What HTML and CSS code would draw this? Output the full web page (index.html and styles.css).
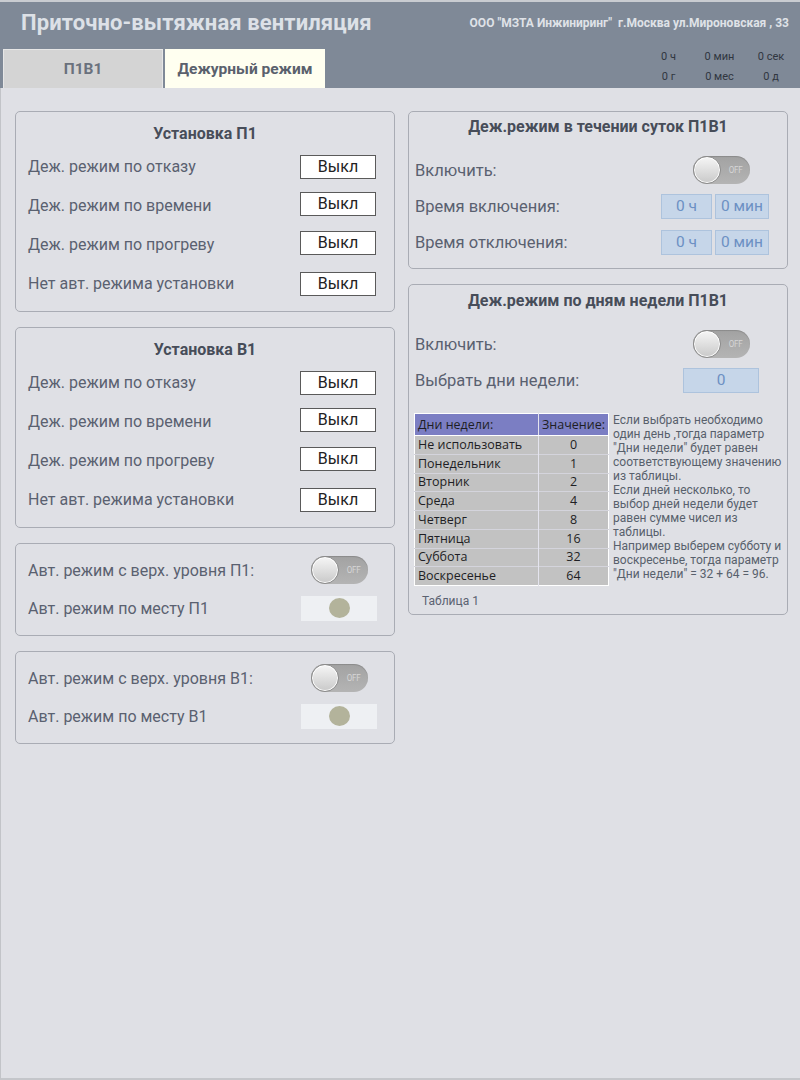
FILE: index.html
```html
<!DOCTYPE html>
<html lang="ru">
<head>
<meta charset="utf-8">
<title>Приточно-вытяжная вентиляция</title>
<link rel="stylesheet" href="styles.css">
</head>
<body>
<div class="screen">
  <header class="top">
    <div class="top-row">
      <h1 class="title">Приточно-вытяжная вентиляция</h1>
      <div class="company">ООО "МЗТА Инжиниринг"&nbsp; г.Москва ул.Мироновская , 33</div>
    </div>
    <div class="tab-row">
      <div class="tabs">
        <div class="tab tab-off">П1В1</div>
        <div class="tab tab-on">Дежурный режим</div>
      </div>
      <div class="clock">
        <span class="tcell">0 ч</span><span class="tcell">0 мин</span><span class="tcell">0 сек</span>
        <span class="tcell">0 г</span><span class="tcell">0 мес</span><span class="tcell">0 д</span>
      </div>
    </div>
  </header>

  <main class="content">
    <div class="col">
      <section class="panel panel-set">
        <h2 class="panel-title">Установка П1</h2>
        <div class="row"><span class="label">Деж. режим по отказу</span><span class="btn b1">Выкл</span></div>
        <div class="row"><span class="label">Деж. режим по времени</span><span class="btn b2">Выкл</span></div>
        <div class="row"><span class="label">Деж. режим по прогреву</span><span class="btn b3">Выкл</span></div>
        <div class="row"><span class="label">Нет авт. режима установки</span><span class="btn b4">Выкл</span></div>
      </section>

      <section class="panel panel-set">
        <h2 class="panel-title">Установка В1</h2>
        <div class="row"><span class="label">Деж. режим по отказу</span><span class="btn b1">Выкл</span></div>
        <div class="row"><span class="label">Деж. режим по времени</span><span class="btn b2">Выкл</span></div>
        <div class="row"><span class="label">Деж. режим по прогреву</span><span class="btn b3">Выкл</span></div>
        <div class="row"><span class="label">Нет авт. режима установки</span><span class="btn b4">Выкл</span></div>
      </section>

      <section class="panel panel-auto">
        <div class="row row-auto"><span class="label">Авт. режим с верх. уровня П1:</span><span class="toggle toggle-left"><span class="knob"></span><span class="off">OFF</span></span></div>
        <div class="row row-auto"><span class="label">Авт. режим по месту П1</span><span class="indicator"><span class="lamp"></span></span></div>
      </section>

      <section class="panel panel-auto">
        <div class="row row-auto"><span class="label">Авт. режим с верх. уровня В1:</span><span class="toggle toggle-left"><span class="knob"></span><span class="off">OFF</span></span></div>
        <div class="row row-auto"><span class="label">Авт. режим по месту В1</span><span class="indicator"><span class="lamp"></span></span></div>
      </section>
    </div>

    <div class="col">
      <section class="panel panel-day">
        <h2 class="panel-title panel-title-r">Деж.режим в течении суток П1В1</h2>
        <div class="rrow"><span class="label">Включить:</span><span class="toggle toggle-r"><span class="knob"></span><span class="off">OFF</span></span></div>
        <div class="rrow"><span class="label">Время включения:</span><span class="fields"><span class="field f-h">0 ч</span><span class="field f-m">0 мин</span></span></div>
        <div class="rrow"><span class="label">Время отключения:</span><span class="fields"><span class="field f-h">0 ч</span><span class="field f-m">0 мин</span></span></div>
      </section>

      <section class="panel panel-week">
        <h2 class="panel-title panel-title-w">Деж.режим по дням недели П1В1</h2>
        <div class="rrow"><span class="label">Включить:</span><span class="toggle toggle-r"><span class="knob"></span><span class="off">OFF</span></span></div>
        <div class="rrow"><span class="label">Выбрать дни недели:</span><span class="field f-day">0</span></div>
        <div class="week-body">
          <table class="days">
            <thead>
              <tr><th class="c-name">Дни недели:</th><th class="c-val">Значение:</th></tr>
            </thead>
            <tbody>
              <tr><td class="c-name">Не использовать</td><td class="c-val">0</td></tr>
              <tr><td class="c-name">Понедельник</td><td class="c-val">1</td></tr>
              <tr><td class="c-name">Вторник</td><td class="c-val">2</td></tr>
              <tr><td class="c-name">Среда</td><td class="c-val">4</td></tr>
              <tr><td class="c-name">Четверг</td><td class="c-val">8</td></tr>
              <tr><td class="c-name">Пятница</td><td class="c-val">16</td></tr>
              <tr><td class="c-name">Суббота</td><td class="c-val">32</td></tr>
              <tr><td class="c-name">Воскресенье</td><td class="c-val">64</td></tr>
            </tbody>
          </table>
          <p class="note">Если выбрать необходимо один день ,тогда параметр "Дни недели" будет равен соответствующему значению из таблицы.<br>Если дней несколько, то выбор дней недели будет равен сумме чисел из таблицы.<br>Например выберем субботу и воскресенье, тогда параметр "Дни недели" = 32 + 64 = 96.</p>
        </div>
        <div class="caption">Таблица 1</div>
      </section>
    </div>
  </main>
</div>
</body>
</html>
```

FILE: styles.css
```css
* { box-sizing: border-box; }

html, body {
  margin: 0;
  padding: 0;
}

body {
  width: 800px;
  height: 1080px;
  overflow: hidden;
  font-family: Roboto, "Noto Sans", "DejaVu Sans", sans-serif;
  background: #dfe0e5;
}

.screen {
  width: 800px;
  height: 1080px;
  background: #dfe0e5;
  border-left: 1px solid #c2c4c8;
  border-bottom: 2px solid #c4c6ca;
  display: flex;
  flex-direction: column;
}

/* ---------- header ---------- */
.top {
  background: #7f8997;
  border-top: 2px solid #c9ccd1;
  margin-left: -1px;
}

.top-row {
  height: 47px;
  display: flex;
  justify-content: space-between;
  align-items: flex-start;
}

.title {
  margin: 10px 0 0 21px;
  font-size: 22px;
  line-height: 22px;
  font-weight: 700;
  color: #dde1e7;
  letter-spacing: 0.1px;
}

.company {
  margin: 14px 11px 0 0;
  font-size: 12px;
  line-height: 15px;
  font-weight: 700;
  color: #dfe2e7;
  white-space: pre;
}

.tab-row {
  height: 39px;
  display: flex;
  justify-content: space-between;
  align-items: flex-start;
}

.tabs {
  display: flex;
  gap: 2px;
  padding-left: 3px;
  height: 39px;
}

.tab {
  width: 160px;
  height: 39px;
  display: flex;
  align-items: center;
  justify-content: center;
  font-size: 15.5px;
  font-weight: 700;
}

.tab-off {
  background: #d4d4d4;
  border: 1px solid #e6e6e6;
  border-bottom: none;
  color: #6a717d;
}

.tab-on {
  background: #fffff0;
  color: #5a616d;
}

.clock {
  display: grid;
  grid-template-columns: 51px 51px 52px;
  grid-auto-rows: 20px;
  margin-top: -2px;
  margin-right: 3px;
  font-size: 11px;
  line-height: 20px;
  color: #30363f;
}

.tcell {
  display: block;
  text-align: center;
  white-space: nowrap;
}

/* ---------- content ---------- */
.content {
  display: flex;
  gap: 13px;
  padding: 23px 0 0 14px;
}

.col {
  width: 380px;
  display: flex;
  flex-direction: column;
  gap: 15px;
}

.panel {
  border: 1px solid #a9acb4;
  border-radius: 5px;
}

.panel-title {
  margin: 0;
  font-size: 16px;
  line-height: 18px;
  font-weight: 700;
  color: #474d59;
  text-align: center;
}

.label {
  font-size: 16px;
  color: #5a6170;
  white-space: nowrap;
}

/* left "Установка" panels */
.panel-set {
  height: 201px;
  padding: 13px 0 8px 0;
}

.panel-set .panel-title {
  margin-bottom: 4px;
}

.row {
  height: 39px;
  display: flex;
  align-items: center;
  justify-content: space-between;
  padding: 0 18px 0 12px;
}

.btn {
  width: 76px;
  height: 24px;
  background: #ffffff;
  border: 1px solid #5a5a5a;
  font-size: 16px;
  color: #222;
  display: flex;
  align-items: center;
  justify-content: center;
}

.b2 { position: relative; top: -2px; }
.b3 { position: relative; top: -2px; }

/* auto panels */
.panel-auto {
  height: 93px;
  padding: 7px 0 8px 0;
}

.row-auto {
  height: 38px;
  padding-right: 17px;
}

.row-auto .toggle {
  margin-right: 9px;
}

.indicator {
  width: 76px;
  height: 25px;
  background: #eef0f3;
  display: flex;
  align-items: center;
  justify-content: center;
}

.lamp {
  width: 21px;
  height: 20px;
  border-radius: 50%;
  background: #b3b39b;
}

/* toggle */
.toggle {
  width: 57px;
  height: 28px;
  border-radius: 14px;
  background: linear-gradient(#a2a2a2, #b4b4b4);
  display: flex;
  align-items: center;
  box-shadow: inset 0 1px 1px rgba(0,0,0,0.15);
}

.knob {
  width: 28px;
  height: 28px;
  border-radius: 50%;
  background: linear-gradient(#f6f6f6, #c9c9c9);
  border: 1px solid #8c8c8c;
  box-shadow: inset 0 0 0 1px #ffffff;
  flex: none;
}

.off {
  flex: 1;
  text-align: center;
  font-size: 9px;
  color: #d6d6d6;
  letter-spacing: -0.3px;
  transform: scaleX(0.9);
}

/* right panels */
.panel-day {
  height: 158px;
  padding: 6px 0 7px 0;
}

.panel-title-r {
  margin-bottom: 16px;
}

.rrow {
  height: 36px;
  display: flex;
  align-items: center;
  justify-content: space-between;
  padding: 0 18px 0 6px;
}

.rrow .label {
  font-size: 16.5px;
}

.toggle-r {
  margin-right: 19px;
}

.fields {
  display: flex;
  gap: 3px;
}

.field {
  height: 25px;
  background: #c6d6e9;
  border: 1px solid #adc3dd;
  font-size: 15.5px;
  color: #6c90c3;
  display: flex;
  align-items: center;
  justify-content: center;
}

.f-h { width: 51px; }
.f-m { width: 54px; }
.f-day { width: 76px; margin-right: 10px; }

.panel-week {
  height: 331px;
  padding: 7px 0 0 5px;
}

.panel-title-w {
  margin-bottom: 16px;
  margin-left: -5px;
}

.panel-week .rrow {
  padding-left: 1px;
}

.week-body {
  display: flex;
  gap: 4px;
  margin-top: 15px;
}

.days {
  width: 195px;
  border-collapse: collapse;
  border: 1px solid #ffffff;
  font-family: "Open Sans", "Noto Sans", sans-serif;
  font-size: 12.5px;
  color: #1e1e24;
  flex: none;
}

.days th {
  height: 22px;
  background: #7b7ec3;
  font-weight: 400;
  padding: 0 3px;
  text-align: left;
  border-bottom: 1px solid #ffffff;
}

.days td {
  height: 18.75px;
  padding: 0 3px;
  background: #c2c2c2;
  border-top: 1px solid #d4d4dc;
  line-height: 16px;
}

.days .c-name {
  width: 124px;
  border-right: 1px solid #e4e4ee;
}

.days .c-val {
  text-align: center;
}

.days th.c-val {
  padding: 0 1px;
}

.note {
  margin: 0;
  padding-top: 0;
  font-size: 12px;
  line-height: 14px;
  color: #58606c;
  width: 175px;
}

.caption {
  margin-top: 8px;
  padding-left: 8px;
  font-size: 12px;
  line-height: 14px;
  color: #5b6271;
}
```
